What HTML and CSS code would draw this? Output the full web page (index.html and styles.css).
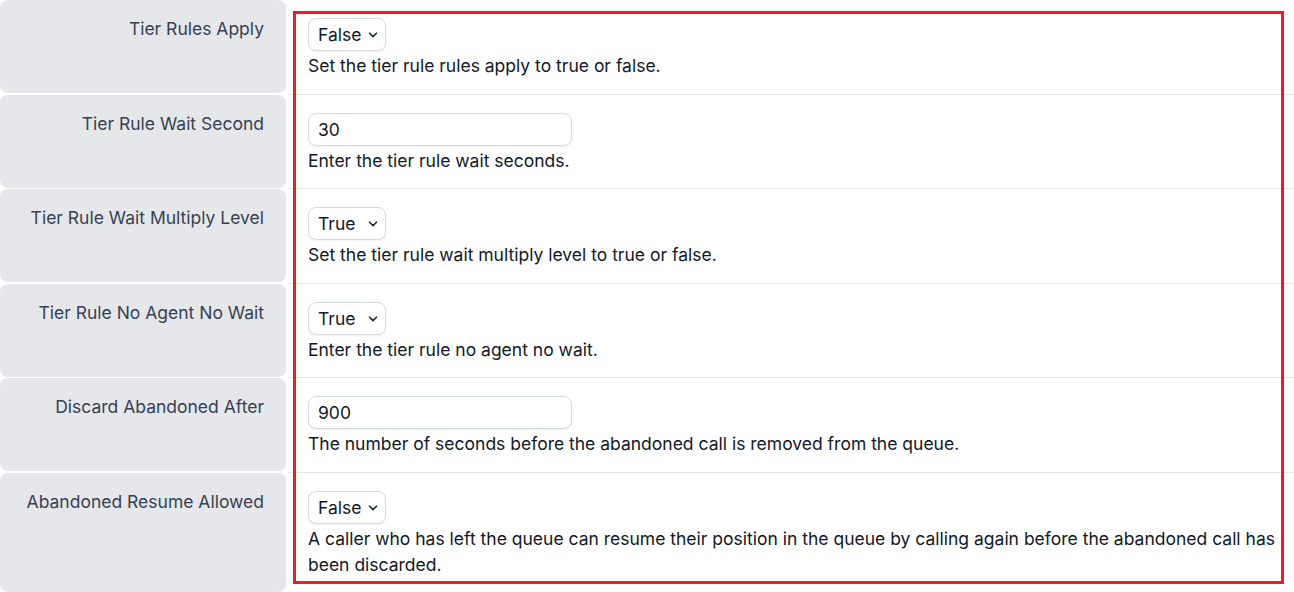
FILE: index.html
```html
<!DOCTYPE html>
<html lang="en">
<head>
<meta charset="utf-8">
<title>Queue settings</title>
<link rel="stylesheet" href="styles.css">
</head>
<body>
<div class="form">
  <div class="row">
    <div class="label">Tier Rules Apply</div>
    <div class="field">
      <span class="select-wrap">
        <select class="select"><option>False</option><option>True</option></select>
        <svg class="chev" width="10" height="6" viewBox="0 0 10 6"><path d="M1.5 1.2 L5 4.6 L8.5 1.2" fill="none" stroke="#1f2937" stroke-width="1.6" stroke-linecap="round" stroke-linejoin="round"/></svg>
      </span>
      <div class="desc">Set the tier rule rules apply to true or false.</div>
    </div>
  </div>
  <div class="row">
    <div class="label">Tier Rule Wait Second</div>
    <div class="field">
      <input class="input" type="text" value="30">
      <div class="desc">Enter the tier rule wait seconds.</div>
    </div>
  </div>
  <div class="row">
    <div class="label">Tier Rule Wait Multiply Level</div>
    <div class="field">
      <span class="select-wrap">
        <select class="select"><option>True</option><option>False</option></select>
        <svg class="chev" width="10" height="6" viewBox="0 0 10 6"><path d="M1.5 1.2 L5 4.6 L8.5 1.2" fill="none" stroke="#1f2937" stroke-width="1.6" stroke-linecap="round" stroke-linejoin="round"/></svg>
      </span>
      <div class="desc">Set the tier rule wait multiply level to true or false.</div>
    </div>
  </div>
  <div class="row">
    <div class="label">Tier Rule No Agent No Wait</div>
    <div class="field">
      <span class="select-wrap">
        <select class="select"><option>True</option><option>False</option></select>
        <svg class="chev" width="10" height="6" viewBox="0 0 10 6"><path d="M1.5 1.2 L5 4.6 L8.5 1.2" fill="none" stroke="#1f2937" stroke-width="1.6" stroke-linecap="round" stroke-linejoin="round"/></svg>
      </span>
      <div class="desc">Enter the tier rule no agent no wait.</div>
    </div>
  </div>
  <div class="row">
    <div class="label">Discard Abandoned After</div>
    <div class="field">
      <input class="input" type="text" value="900">
      <div class="desc">The number of seconds before the abandoned call is removed from the queue.</div>
    </div>
  </div>
  <div class="row">
    <div class="label">Abandoned Resume Allowed</div>
    <div class="field">
      <span class="select-wrap">
        <select class="select"><option>False</option><option>True</option></select>
        <svg class="chev" width="10" height="6" viewBox="0 0 10 6"><path d="M1.5 1.2 L5 4.6 L8.5 1.2" fill="none" stroke="#1f2937" stroke-width="1.6" stroke-linecap="round" stroke-linejoin="round"/></svg>
      </span>
      <div class="desc">A caller who has left the queue can resume their position in the queue by calling again before the abandoned call has been discarded.</div>
    </div>
  </div>
  <div class="highlight"></div>
</div>
</body>
</html>
```

FILE: styles.css
```css
html, body {
  margin: 0;
  padding: 0;
  background: #ffffff;
}

body {
  font-family: Inter, "Noto Sans", "Liberation Sans", sans-serif;
  font-size: 17.5px;
  line-height: 26px;
  color: #111827;
  overflow: hidden;
}

.form {
  position: relative;
  width: 1294px;
}

.row {
  display: grid;
  grid-template-columns: 286px 1fr;
  column-gap: 2px;
}

.label {
  background: #e5e7eb;
  border-radius: 8px;
  margin-bottom: 1.5px;
  padding: 16px 22px 0 0;
  text-align: right;
  color: #374151;
}

.field {
  padding: 18px 10px 14.5px 20px;
  border-bottom: 1px solid #e5e7eb;
  display: flex;
  flex-direction: column;
  align-items: flex-start;
}

.select-wrap {
  position: relative;
  display: inline-block;
  height: 33px;
}

.select {
  -webkit-appearance: none;
  appearance: none;
  box-sizing: border-box;
  width: 78px;
  height: 33px;
  padding: 0 0 0 9px;
  border: 1px solid #d6dae1;
  border-radius: 8px;
  background: #ffffff;
  box-shadow: 0 1px 2px rgba(17, 24, 39, 0.06);
  font-family: inherit;
  font-size: 17.5px;
  color: #111827;
  outline: none;
}

.chev {
  position: absolute;
  right: 8px;
  top: 14px;
  pointer-events: none;
}

.input {
  box-sizing: border-box;
  width: 264px;
  height: 33px;
  padding: 0 9px;
  border: 1px solid #d6dae1;
  border-radius: 8px;
  background: #ffffff;
  box-shadow: 0 1px 2px rgba(17, 24, 39, 0.06);
  font-family: inherit;
  font-size: 17.5px;
  color: #111827;
  outline: none;
}

.desc {
  margin-top: 2px;
  color: #111827;
}

.highlight {
  position: absolute;
  left: 293px;
  top: 11px;
  width: 985px;
  height: 567px;
  border: 3px solid #ed1c24;
  pointer-events: none;
}
```
